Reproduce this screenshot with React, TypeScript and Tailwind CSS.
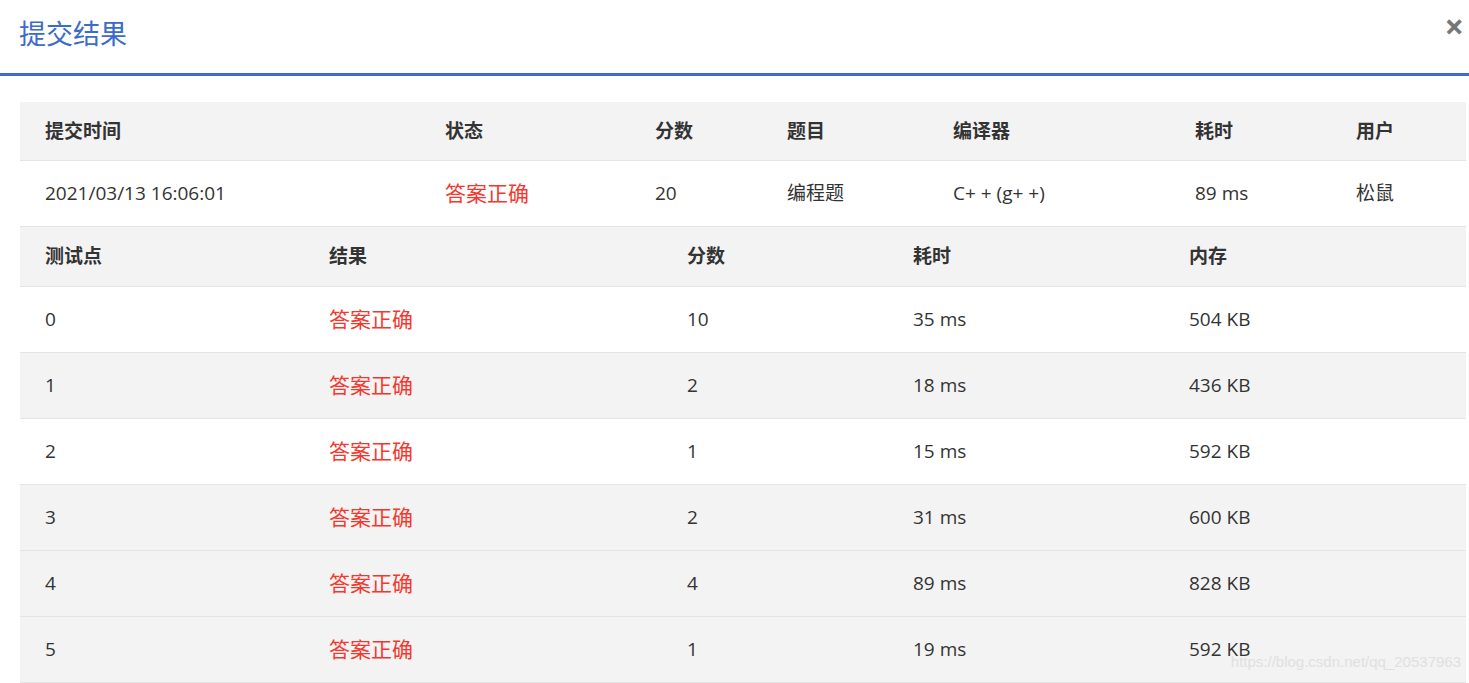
const font = { fontFamily: '"Open Sans", "Noto Sans CJK SC", sans-serif' };

const top = { cols: ['w-[400px]', 'w-[210px]', 'w-[132px]', 'w-[166px]', 'w-[242px]', 'w-[161px]', 'flex-1'] };
const sub = { cols: ['w-[284px]', 'w-[358px]', 'w-[226px]', 'w-[276px]', 'flex-1'] };

const cases = [
  ['0', '10', '35 ms', '504 KB', false],
  ['1', '2', '18 ms', '436 KB', true],
  ['2', '1', '15 ms', '592 KB', false],
  ['3', '2', '31 ms', '600 KB', true],
  ['4', '4', '89 ms', '828 KB', true],
  ['5', '1', '19 ms', '592 KB', true],
] as const;

function Row({ cells, widths, className }: { cells: React.ReactNode[]; widths: string[]; className: string }) {
  return (
    <div className={`flex items-center border-b border-[#e4e4e4] ${className}`}>
      {cells.map((c, i) => (
        <div key={i} className={`${widths[i]} pl-[25px]`}>{c}</div>
      ))}
    </div>
  );
}

const ok = <span className="text-[#f5382e] text-[21px]">答案正确</span>;

export default function App() {
  return (
    <div className="relative w-[1469px] h-[683px] bg-white overflow-hidden text-[#333]" style={font}>
      <div className="h-[76px] flex items-center justify-between pl-[19px] pr-[5px] border-b-[3px] border-[#3b6bcb]">
        <h1 className="text-[27px] text-[#3b6bcb] pb-[16px] mt-[12px]">提交结果</h1>
        <span className="text-[34px] text-[#777] font-bold leading-none pb-[28px] mt-[6px]">×</span>
      </div>
      <div className="mx-[20px] mt-[26px] w-[1446px] text-[19px]">
        <Row
          widths={top.cols}
          className="h-[59px] bg-[#f3f3f3] font-bold"
          cells={['提交时间', '状态', '分数', '题目', '编译器', '耗时', '用户']}
        />
        <Row
          widths={top.cols}
          className="h-[66px] bg-white"
          cells={['2021/03/13 16:06:01', ok, '20', '编程题', 'C+ + (g+ +)', '89 ms', '松鼠']}
        />
        <Row
          widths={sub.cols}
          className="h-[60px] bg-[#f3f3f3] font-bold"
          cells={['测试点', '结果', '分数', '耗时', '内存']}
        />
        {cases.map(([id, score, time, mem, gray]) => (
          <Row
            key={id}
            widths={sub.cols}
            className={`h-[66px] ${gray ? 'bg-[#f3f3f3]' : 'bg-white'}`}
            cells={[id, ok, score, time, mem]}
          />
        ))}
      </div>
      <span className="absolute right-[8px] bottom-[10px] text-[15px] text-[#e0e0e0]" style={{ fontFamily: '"Liberation Sans Narrow", "Liberation Sans", sans-serif' }}>
        https://blog.csdn.net/qq_20537963
      </span>
    </div>
  );
}
